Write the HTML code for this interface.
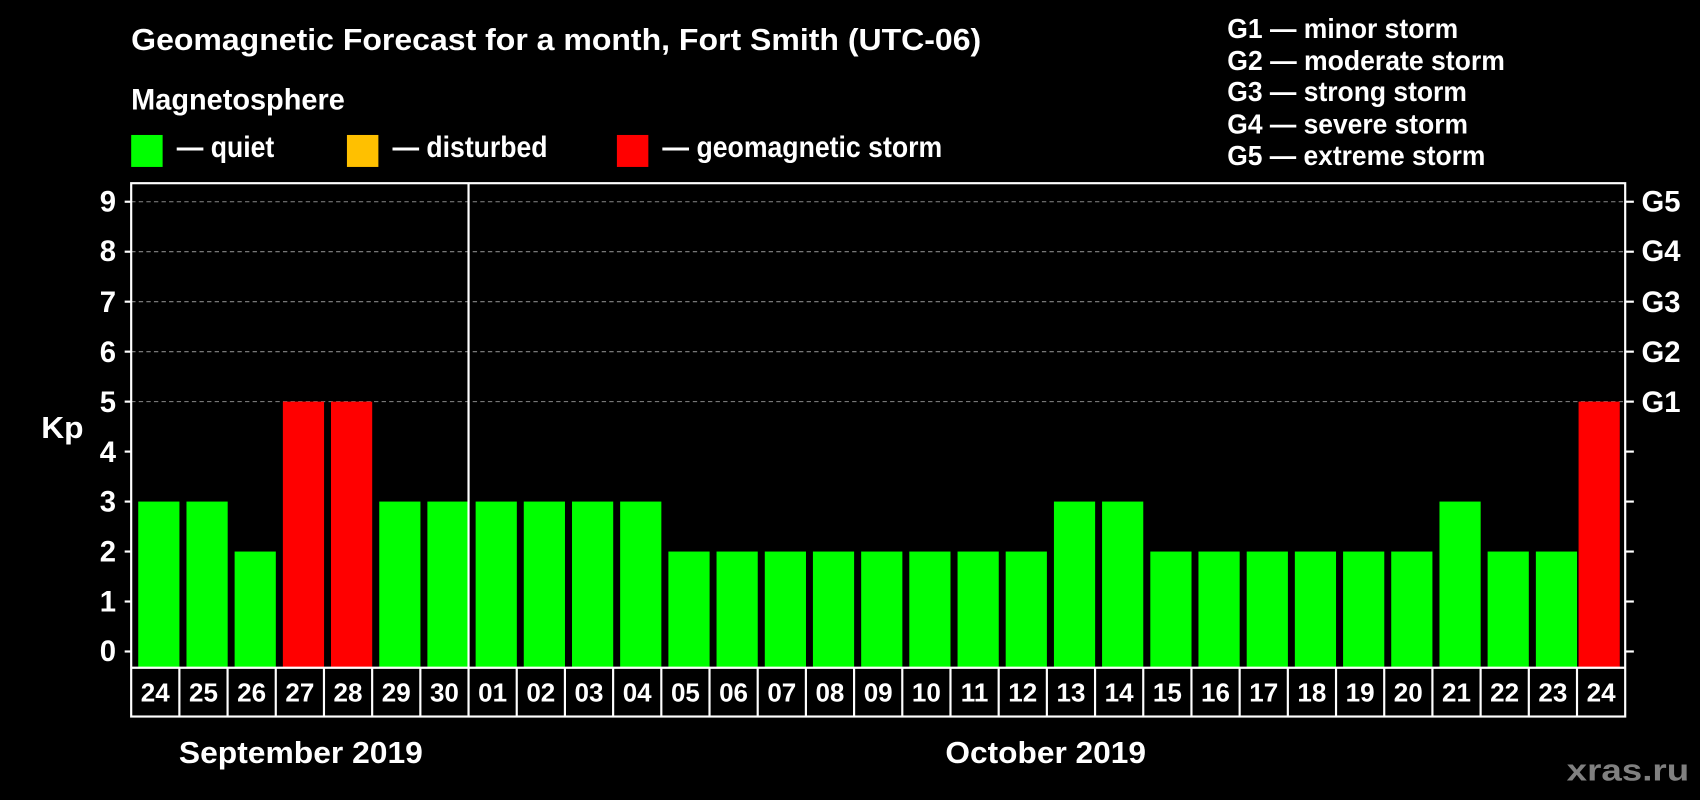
<!DOCTYPE html>
<html><head><meta charset="utf-8"><style>
html,body{margin:0;padding:0;background:#000;width:1700px;height:800px;overflow:hidden}
svg{display:block}
text{font-family:"Liberation Sans",Arial,sans-serif;font-weight:bold;fill:#fff}
</style></head><body>
<svg width="1700" height="800" viewBox="0 0 1568 738" preserveAspectRatio="none" xmlns="http://www.w3.org/2000/svg">
<rect width="1568" height="738" fill="#000"/>
<text x="121" y="46" font-size="28" textLength="784" lengthAdjust="spacingAndGlyphs">Geomagnetic Forecast for a month, Fort Smith (UTC-06)</text>
<text x="121" y="101" font-size="27" textLength="197" lengthAdjust="spacingAndGlyphs">Magnetosphere</text>
<rect x="121" y="124.5" width="29" height="29.5" fill="#00ff00"/>
<rect x="320" y="124.5" width="29" height="29.5" fill="#ffc000"/>
<rect x="569" y="124.5" width="29" height="29.5" fill="#ff0000"/>
<text x="163" y="145" font-size="27" textLength="90" lengthAdjust="spacingAndGlyphs">— quiet</text>
<text x="362" y="145" font-size="27" textLength="143" lengthAdjust="spacingAndGlyphs">— disturbed</text>
<text x="611" y="145" font-size="27" textLength="258" lengthAdjust="spacingAndGlyphs">— geomagnetic storm</text>
<text x="1132" y="35" font-size="26" textLength="213" lengthAdjust="spacingAndGlyphs">G1 — minor storm</text>
<text x="1132" y="64.5" font-size="26" textLength="256" lengthAdjust="spacingAndGlyphs">G2 — moderate storm</text>
<text x="1132" y="93" font-size="26" textLength="221" lengthAdjust="spacingAndGlyphs">G3 — strong storm</text>
<text x="1132" y="123" font-size="26" textLength="222" lengthAdjust="spacingAndGlyphs">G4 — severe storm</text>
<text x="1132" y="152" font-size="26" textLength="238" lengthAdjust="spacingAndGlyphs">G5 — extreme storm</text>

<g stroke="#888" stroke-width="1" stroke-dasharray="4,3">
<line x1="121" x2="1499" y1="370.5" y2="370.5"/>
<line x1="121" x2="1499" y1="324.4" y2="324.4"/>
<line x1="121" x2="1499" y1="278.3" y2="278.3"/>
<line x1="121" x2="1499" y1="232.2" y2="232.2"/>
<line x1="121" x2="1499" y1="186.1" y2="186.1"/>
</g>

<g fill="#00ff00">
<rect x="127.5" y="462.7" width="38" height="153.3"/>
<rect x="172" y="462.7" width="38" height="153.3"/>
<rect x="216.4" y="508.8" width="38" height="107.2"/>
<rect x="349.8" y="462.7" width="38" height="153.3"/>
<rect x="394.2" y="462.7" width="38" height="153.3"/>
<rect x="438.7" y="462.7" width="38" height="153.3"/>
<rect x="483.1" y="462.7" width="38" height="153.3"/>
<rect x="527.6" y="462.7" width="38" height="153.3"/>
<rect x="572" y="462.7" width="38" height="153.3"/>
<rect x="616.5" y="508.8" width="38" height="107.2"/>
<rect x="660.9" y="508.8" width="38" height="107.2"/>
<rect x="705.4" y="508.8" width="38" height="107.2"/>
<rect x="749.8" y="508.8" width="38" height="107.2"/>
<rect x="794.3" y="508.8" width="38" height="107.2"/>
<rect x="838.7" y="508.8" width="38" height="107.2"/>
<rect x="883.2" y="508.8" width="38" height="107.2"/>
<rect x="927.6" y="508.8" width="38" height="107.2"/>
<rect x="972.1" y="462.7" width="38" height="153.3"/>
<rect x="1016.5" y="462.7" width="38" height="153.3"/>
<rect x="1061" y="508.8" width="38" height="107.2"/>
<rect x="1105.4" y="508.8" width="38" height="107.2"/>
<rect x="1149.9" y="508.8" width="38" height="107.2"/>
<rect x="1194.3" y="508.8" width="38" height="107.2"/>
<rect x="1238.8" y="508.8" width="38" height="107.2"/>
<rect x="1283.2" y="508.8" width="38" height="107.2"/>
<rect x="1327.7" y="462.7" width="38" height="153.3"/>
<rect x="1372.1" y="508.8" width="38" height="107.2"/>
<rect x="1416.6" y="508.8" width="38" height="107.2"/>
</g>
<g fill="#ff0000">
<rect x="260.9" y="370.5" width="38" height="245.5"/>
<rect x="305.3" y="370.5" width="38" height="245.5"/>
<rect x="1456" y="370.5" width="38" height="245.5"/>
</g>

<g stroke="#fff" stroke-width="2">
<rect x="121" y="169" width="1378" height="492" fill="none"/>
<line x1="121" x2="1499" y1="616" y2="616"/>
<line x1="432.16" x2="432.16" y1="169" y2="661"/>
<line x1="165.45" x2="165.45" y1="616" y2="661"/>
<line x1="209.9" x2="209.9" y1="616" y2="661"/>
<line x1="254.35" x2="254.35" y1="616" y2="661"/>
<line x1="298.81" x2="298.81" y1="616" y2="661"/>
<line x1="343.26" x2="343.26" y1="616" y2="661"/>
<line x1="387.71" x2="387.71" y1="616" y2="661"/>
<line x1="476.61" x2="476.61" y1="616" y2="661"/>
<line x1="521.06" x2="521.06" y1="616" y2="661"/>
<line x1="565.52" x2="565.52" y1="616" y2="661"/>
<line x1="609.97" x2="609.97" y1="616" y2="661"/>
<line x1="654.42" x2="654.42" y1="616" y2="661"/>
<line x1="698.87" x2="698.87" y1="616" y2="661"/>
<line x1="743.32" x2="743.32" y1="616" y2="661"/>
<line x1="787.77" x2="787.77" y1="616" y2="661"/>
<line x1="832.23" x2="832.23" y1="616" y2="661"/>
<line x1="876.68" x2="876.68" y1="616" y2="661"/>
<line x1="921.13" x2="921.13" y1="616" y2="661"/>
<line x1="965.58" x2="965.58" y1="616" y2="661"/>
<line x1="1010.03" x2="1010.03" y1="616" y2="661"/>
<line x1="1054.48" x2="1054.48" y1="616" y2="661"/>
<line x1="1098.94" x2="1098.94" y1="616" y2="661"/>
<line x1="1143.39" x2="1143.39" y1="616" y2="661"/>
<line x1="1187.84" x2="1187.84" y1="616" y2="661"/>
<line x1="1232.29" x2="1232.29" y1="616" y2="661"/>
<line x1="1276.74" x2="1276.74" y1="616" y2="661"/>
<line x1="1321.19" x2="1321.19" y1="616" y2="661"/>
<line x1="1365.65" x2="1365.65" y1="616" y2="661"/>
<line x1="1410.1" x2="1410.1" y1="616" y2="661"/>
<line x1="1454.55" x2="1454.55" y1="616" y2="661"/>
<line x1="115" x2="121" y1="601" y2="601"/><line x1="1499" x2="1507" y1="601" y2="601"/>
<line x1="115" x2="121" y1="554.9" y2="554.9"/><line x1="1499" x2="1507" y1="554.9" y2="554.9"/>
<line x1="115" x2="121" y1="508.8" y2="508.8"/><line x1="1499" x2="1507" y1="508.8" y2="508.8"/>
<line x1="115" x2="121" y1="462.7" y2="462.7"/><line x1="1499" x2="1507" y1="462.7" y2="462.7"/>
<line x1="115" x2="121" y1="416.6" y2="416.6"/><line x1="1499" x2="1507" y1="416.6" y2="416.6"/>
<line x1="115" x2="121" y1="370.5" y2="370.5"/><line x1="1499" x2="1507" y1="370.5" y2="370.5"/>
<line x1="115" x2="121" y1="324.4" y2="324.4"/><line x1="1499" x2="1507" y1="324.4" y2="324.4"/>
<line x1="115" x2="121" y1="278.3" y2="278.3"/><line x1="1499" x2="1507" y1="278.3" y2="278.3"/>
<line x1="115" x2="121" y1="232.2" y2="232.2"/><line x1="1499" x2="1507" y1="232.2" y2="232.2"/>
<line x1="115" x2="121" y1="186.1" y2="186.1"/><line x1="1499" x2="1507" y1="186.1" y2="186.1"/>
</g>

<g font-size="27" text-anchor="end">
<text x="107" y="610">0</text>
<text x="107" y="564">1</text>
<text x="107" y="518">2</text>
<text x="107" y="472">3</text>
<text x="107" y="426">4</text>
<text x="107" y="380">5</text>
<text x="107" y="334">6</text>
<text x="107" y="288">7</text>
<text x="107" y="241">8</text>
<text x="107" y="195">9</text>
</g>
<g font-size="27">
<text x="1514" y="380">G1</text>
<text x="1514" y="334">G2</text>
<text x="1514" y="288">G3</text>
<text x="1514" y="241">G4</text>
<text x="1514" y="195">G5</text>
</g>

<g font-size="24" text-anchor="middle">
<text x="143.2" y="647">24</text>
<text x="187.7" y="647">25</text>
<text x="232.1" y="647">26</text>
<text x="276.6" y="647">27</text>
<text x="321" y="647">28</text>
<text x="365.5" y="647">29</text>
<text x="409.9" y="647">30</text>
<text x="454.4" y="647">01</text>
<text x="498.8" y="647">02</text>
<text x="543.3" y="647">03</text>
<text x="587.7" y="647">04</text>
<text x="632.2" y="647">05</text>
<text x="676.6" y="647">06</text>
<text x="721.1" y="647">07</text>
<text x="765.5" y="647">08</text>
<text x="810" y="647">09</text>
<text x="854.4" y="647">10</text>
<text x="898.9" y="647">11</text>
<text x="943.3" y="647">12</text>
<text x="987.8" y="647">13</text>
<text x="1032.2" y="647">14</text>
<text x="1076.7" y="647">15</text>
<text x="1121.1" y="647">16</text>
<text x="1165.6" y="647">17</text>
<text x="1210" y="647">18</text>
<text x="1254.5" y="647">19</text>
<text x="1298.9" y="647">20</text>
<text x="1343.4" y="647">21</text>
<text x="1387.8" y="647">22</text>
<text x="1432.3" y="647">23</text>
<text x="1476.8" y="647">24</text>
</g>

<text x="38" y="404" font-size="28" textLength="39" lengthAdjust="spacingAndGlyphs">Kp</text>
<text x="165" y="704" font-size="28" textLength="225" lengthAdjust="spacingAndGlyphs">September 2019</text>
<text x="872" y="704" font-size="28" textLength="185" lengthAdjust="spacingAndGlyphs">October 2019</text>
<text x="1445" y="720" font-size="28" style="fill:#808080" textLength="113" lengthAdjust="spacingAndGlyphs">xras.ru</text>
</svg>
</body></html>
